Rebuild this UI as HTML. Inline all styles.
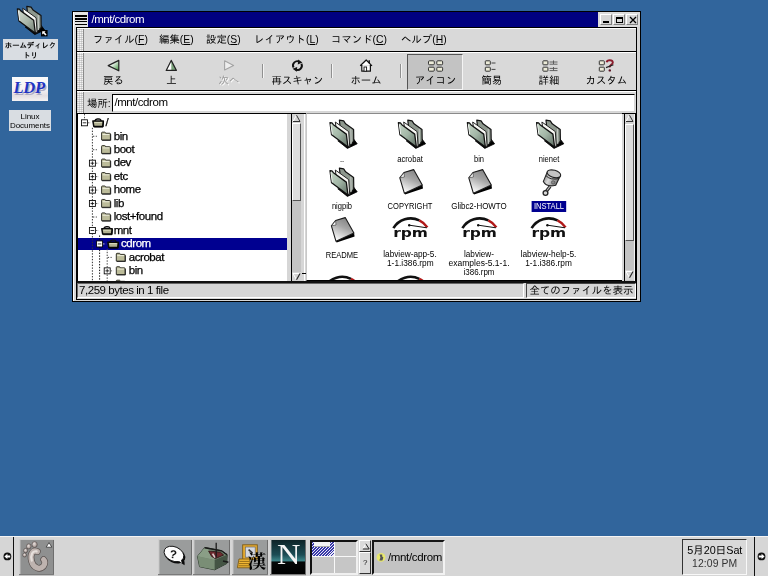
<!DOCTYPE html>
<html><head><meta charset="utf-8">
<style>
*{box-sizing:border-box;margin:0;padding:0}
html,body{width:768px;height:576px;overflow:hidden}
body{background:#31659c;font-family:"Liberation Sans","IPAGothic","Noto Sans CJK JP",sans-serif;font-size:11.5px;color:#000;position:relative;line-height:1}
.a{position:absolute}
.jp{font-family:"Liberation Sans","IPAGothic","Noto Sans CJK JP",sans-serif;font-size:10.4px}
.lat{letter-spacing:-0.45px}
/* window */
#win{position:absolute;left:72px;top:11px;width:569px;height:291px;background:#d6d6d6;border:1px solid #000}
#win .hl{position:absolute;left:0;top:0;width:1px;height:289px;background:#fff}
#ticon{position:absolute;left:1px;top:0;width:14px;height:15px;background:#e4e4e4}
#ticon i{position:absolute;left:1px;width:12px;height:1.4px;background:#000}
#title{position:absolute;left:15px;top:0;width:510px;height:15px;background:#000080;color:#fff;white-space:nowrap}
#title span{position:absolute;left:3.5px;top:1.5px;font-size:11.5px;letter-spacing:-0.5px}
#tbtns{position:absolute;left:525px;top:0;width:42px;height:15px;background:#dcdcdc}
.wb{position:absolute;top:2px;width:12px;height:11px;background:#d6d6d6;border:1px solid;border-color:#fff #808080 #808080 #fff}
#client{position:absolute;left:3px;top:15px;width:561px;height:273px;border:1px solid #000;background:#d6d6d6}
.bar{position:absolute;left:0;width:559px;background:#d9d9d9;border-top:1px solid #fff;border-bottom:1px solid #000}
.handle{position:absolute;left:0;top:0;bottom:0;width:7px;border-right:1px solid #8a8a8a;
 background-image:repeating-linear-gradient(0deg,#f4f4f4 0 1px,#d2d2d2 1px 2px);}
.handle:after{content:"";position:absolute;left:0;top:0;right:0;bottom:0;background-image:repeating-linear-gradient(90deg,rgba(120,120,120,.22) 0 1px,rgba(255,255,255,0) 1px 2px)}
.mi{position:absolute;top:5.5px;white-space:nowrap}
.mi u{text-decoration:underline;text-underline-offset:1px}
.tb{position:absolute;top:1px;height:35px;text-align:center}
.tb .lbl{position:absolute;left:-10px;right:-10px;top:20px;text-align:center;white-space:nowrap}
.tb svg{position:absolute;left:50%;top:3px}
.tl{position:absolute;top:23.1px;transform:translateX(-50%);white-space:nowrap}
.sep{position:absolute;top:10.5px;width:2px;height:14.5px;border-left:1px solid #909090;border-right:1px solid #f4f4f4}

.tt{-webkit-text-stroke:0.25px currentColor;position:absolute;font-size:11.5px;letter-spacing:-0.45px;white-space:nowrap}
.il{position:absolute;font-size:8.3px;white-space:nowrap;transform:translateX(-50%) scaleX(0.91);letter-spacing:0}
.sbtn{background:#d4d4d4}
.sld{background:#dedede;border:1px solid;border-color:#fff #555 #555 #fff}
.dl{background:#d9dde2;text-align:center;white-space:nowrap;color:#000}
.pb{background:#9a9c9c;box-shadow:inset 1.4px 1px 0 #cfcfcf,inset -1px 0 0 #6e6e6e,0 1.2px 0 #7a7a7a}
#win,#panel,.dl{will-change:transform}
</style></head>
<body>
<!-- desktop icons -->
<svg class="a" style="left:15px;top:4px" width="36" height="36" viewBox="0 0 36 36">
 <defs><linearGradient id="ff2" x1="0" y1="0" x2="1" y2="1"><stop offset="0" stop-color="#d4dcd0"/><stop offset="0.55" stop-color="#aab6a8"/><stop offset="1" stop-color="#6c786e"/></linearGradient></defs>
 <g transform="translate(1.2 1.4)">
 <path d="M9 21.6L18.6 29.2L28.4 24.6L24.6 19.6Z" fill="#000" stroke="#000" stroke-width="0.8" stroke-linejoin="round"/>
 <path d="M10.6 1L14.9 1.7L16.8 4.6L24.8 10.2L25 22L21 26.6L12 14Z" fill="#8e988e" stroke="#111" stroke-width="1.2" stroke-linejoin="round"/>
 <path d="M22 9.6L22.4 24.6" stroke="#c4c8c4" stroke-width="1"/>
 <path d="M6.5 2.8L19.9 12.4L20.9 27L19 27.2L8 14Z" fill="#f8f8f4" stroke="#222" stroke-width="1" stroke-linejoin="round"/>
 <path d="M1.2 3.5L3.2 3.7L4.6 5.5L17.5 14.9L19.2 27.8L2.8 15.6Z" fill="url(#ff2)" stroke="#111" stroke-width="1.3" stroke-linejoin="round"/>
 <path d="M2.1 5L3.5 15.2" stroke="#f0f4f0" stroke-width="1"/>
 </g>
 <rect x="26" y="26" width="6.6" height="6.4" fill="#000"/>
 <path d="M27.2 27.2H30.6L29.5 28.3L31.6 30.4L30.4 31.4L28.4 29.4L27.2 30.5Z" fill="#fff"/>
</svg>
<div class="a dl" style="left:3px;top:39px;width:55px;height:20.6px;font-size:7.35px;line-height:9.8px;padding-top:2.3px;font-weight:bold">ホームディレク<br>トリ</div>
<div class="a" style="left:12px;top:77px;width:36.2px;height:24px;background:linear-gradient(180deg,#fbfbfb 0,#f6f2f4 50%,#e4dfe2 78%,#f4f2f3 100%);overflow:hidden">
 <span class="a" style="left:2.6px;top:3.6px;font-family:'Liberation Serif',serif;font-style:italic;font-weight:bold;font-size:16.5px;line-height:18px;color:#b0acc4;letter-spacing:-0.2px">LDP</span>
 <span class="a" style="left:1.4px;top:2.4px;font-family:'Liberation Serif',serif;font-style:italic;font-weight:bold;font-size:16.5px;line-height:18px;color:#2034c4;letter-spacing:-0.2px">LDP</span>
</div>
<div class="a dl" style="left:9.2px;top:110px;width:42px;height:20.8px;font-size:8px;line-height:8.7px;padding-top:2.8px;letter-spacing:-0.05px">Linux<br>Documents</div>

<div id="win">
 <div class="hl"></div>
 <div id="ticon"><i style="top:3.2px"></i><i style="top:6.2px"></i><i style="top:9.1px"></i><i style="top:12.1px"></i></div>
 <div id="title"><span>/mnt/cdrom</span></div>
 <div id="tbtns">
  <div class="wb" style="left:2px"><i class="a" style="left:2px;top:5.5px;width:6px;height:2.2px;background:#000"></i></div>
  <div class="wb" style="left:15px"><i class="a" style="left:2px;top:1.5px;width:6.5px;height:6.5px;border:1px solid #000;border-top-width:2px"></i></div>
  <div class="wb" style="left:28px"><svg class="a" style="left:1.5px;top:1px" width="8" height="8" viewBox="0 0 8 8"><path d="M1 1L7 7M7 1L1 7" stroke="#000" stroke-width="1.3"/></svg></div>
 </div>
 <div id="client">
  <div class="bar" id="menubar" style="top:0;height:24px">
   <div class="handle"></div>
   <span class="mi jp" style="left:16px">ファイル(<u>F</u>)</span>
   <span class="mi jp" style="left:82px">編集(<u>E</u>)</span>
   <span class="mi jp" style="left:129px">設定(<u>S</u>)</span>
   <span class="mi jp" style="left:177px">レイアウト(<u>L</u>)</span>
   <span class="mi jp" style="left:254px">コマンド(<u>C</u>)</span>
   <span class="mi jp" style="left:324px">ヘルプ(<u>H</u>)</span>
  </div>
  <div class="bar" id="toolbar" style="top:24px;height:39px">
   <div class="handle"></div>
   <div class="a" style="left:330px;top:1px;width:56px;height:36px;background:#c3c3c3;border:1px solid;border-color:#555 #f4f4f4 #f4f4f4 #555"></div>
   <svg class="a" style="left:0;top:0" width="560" height="38" viewBox="77 52 560 38">
    <defs>
     <linearGradient id="gb" x1="0" y1="0" x2="1" y2="1"><stop offset="0.3" stop-color="#fff"/><stop offset="1" stop-color="#3f8f3f"/></linearGradient>
     <linearGradient id="gu" x1="0" y1="0" x2="1" y2="0"><stop offset="0.45" stop-color="#fff"/><stop offset="0.55" stop-color="#7aa27a"/></linearGradient>
    </defs>
    <!-- back -->
    <path d="M108.2 64.6L118.8 59.4L118.8 69.8Z" fill="url(#gb)" stroke="#222" stroke-width="1.2" stroke-linejoin="round"/>
    <!-- up -->
    <path d="M171.2 59.4L176.4 69.4L166.2 69.4Z" fill="url(#gu)" stroke="#222" stroke-width="1.2" stroke-linejoin="round"/>
    <!-- forward (disabled) -->
    <path d="M224.6 59.8L233.6 64.5L224.6 69Z" fill="#eee" stroke="#a4a4a4" stroke-width="1.1" stroke-linejoin="round"/>
    <!-- rescan -->
    <g fill="none" stroke="#111" stroke-width="1.9">
     <path d="M293.6 66.6A4.2 4.2 0 0 1 299.6 61"/>
     <path d="M301.4 62.8A4.2 4.2 0 0 1 295.6 68.4"/>
    </g>
    <path d="M298.2 58.6L302.4 61.6L297.8 63.4Z" fill="#111"/>
    <path d="M296.8 70.8L292.6 67.8L297.2 66Z" fill="#111"/>
    <!-- home -->
    <path d="M360.2 64.8L366.2 59L372 64.8M361.8 64V70.2H370.4V64" fill="#fff" stroke="#111" stroke-width="1.2" stroke-linejoin="round"/>
    <path d="M369.2 59.2V62.2" stroke="#111" stroke-width="1.4"/>
    <rect x="364" y="66" width="2.6" height="4.2" fill="#fff" stroke="#111" stroke-width="0.9"/>
    <!-- icons -->
    <g fill="#ecebd8" stroke="#333" stroke-width="1">
     <rect x="428.5" y="59.8" width="5.8" height="4" rx="1"/><rect x="436.8" y="59.8" width="5.8" height="4" rx="1"/>
     <rect x="428.5" y="66.2" width="5.8" height="4" rx="1"/><rect x="436.8" y="66.2" width="5.8" height="4" rx="1"/>
     <!-- brief -->
     <rect x="485.3" y="59.8" width="5" height="4" rx="0.6"/><rect x="485.3" y="66.2" width="5" height="4" rx="0.6"/>
     <!-- detail -->
     <rect x="542.9" y="59.8" width="5" height="4" rx="0.6"/><rect x="542.9" y="66.2" width="5" height="4" rx="0.6"/>
     <!-- custom -->
     <rect x="599.3" y="59.8" width="5" height="4" rx="0.6"/><rect x="599.3" y="66.2" width="5" height="4" rx="0.6"/>
    </g>
    <g stroke="#444" stroke-width="1">
     <path d="M491.5 62H495.5M491.5 68.4H495.5"/>
     <path d="M549.5 61H557.5M549.5 63.2H557.5M553.5 59.4V63M549.5 67.4H557.5M549.5 69.6H557.5M553.5 66V69.6" stroke="#555" stroke-width="0.9"/>
    </g>
    <path d="M606.6 61.2C607.2 58.6 612.6 58.6 612.8 61.4C612.8 63.6 609.6 63.6 609.8 66.4" fill="none" stroke="#8c1c2c" stroke-width="1.9"/>
    <path d="M606 66.6L613.4 63.8" stroke="#222" stroke-width="1.2"/>
    <circle cx="609.8" cy="69.4" r="1.2" fill="#5a1020"/>
   </svg>
   <div class="sep" style="left:185px"></div>
   <div class="sep" style="left:254px"></div>
   <div class="sep" style="left:322.5px"></div>
   <span class="tl jp" style="left:36.5px">戻る</span>
   <span class="tl jp" style="left:94.4px">上</span>
   <span class="tl jp" style="left:152px;color:#999;text-shadow:1px 1px 0 #fff">次へ</span>
   <span class="tl jp" style="left:220.5px">再スキャン</span>
   <span class="tl jp" style="left:289px">ホーム</span>
   <span class="tl jp" style="left:358.6px">アイコン</span>
   <span class="tl jp" style="left:414.8px">簡易</span>
   <span class="tl jp" style="left:472px">詳細</span>
   <span class="tl jp" style="left:529.4px">カスタム</span>

  </div>
  <div class="bar" id="locbar" style="top:63px;height:23px">
   <div class="handle"></div>
   <span class="a jp" style="left:10px;top:6.5px">場所:</span>
   <div class="a" style="left:35px;top:2.4px;width:523px;height:17.2px;background:#fff;border:1px solid #000;border-right-color:#d6d6d6;border-bottom-color:#d6d6d6"><span class="a lat" style="left:1.5px;top:2px;font-size:11.5px">/mnt/cdrom</span></div>
  </div>
  <!-- panes: client inner origin (77,28) -->
  <div class="a" id="treepane" style="left:0;top:85px;width:210px;height:168.5px;background:#fff;border-top:1.5px solid #000;border-left:1px solid #000;overflow:hidden"><div class="a" style="left:-1px;top:-0.5px;width:211px;height:167px"><!--TREE--><div class="a" style="left:0;top:124.04px;width:210.5px;height:12.8px;background:#000090"></div>
<svg class="a" style="left:0;top:0" width="211" height="167" viewBox="0 0 211 167"><path d="M7.50 0.00L7.50 8.80" stroke="#555" stroke-width="1" stroke-dasharray="1.4 1.45" fill="none"/><path d="M15.40 13.80L15.40 168.00" stroke="#333" stroke-width="1" stroke-dasharray="1.4 1.45" fill="none"/><path d="M22.60 121.48L22.60 168.00" stroke="#111" stroke-width="1" stroke-dasharray="1.4 1.45" fill="none"/><path d="M30.20 134.94L30.20 168.00" stroke="#444" stroke-width="1" stroke-dasharray="1.4 1.45" fill="none"/><rect x="4.50" y="5.80" width="6.0" height="6.0" fill="#fff" stroke="#000" stroke-width="0.85"/><path d="M5.70 8.80H9.30" stroke="#000" stroke-width="0.8"/><path d="M11.00 8.80L14.00 8.80" stroke="#666" stroke-width="1" stroke-dasharray="1.4 1.45" fill="none"/><g transform="translate(15.20 4.20)"><path d="M2.6 2.8Q3.2 0.8 5 0.8H7Q8.6 0.8 9 2.8" fill="none" stroke="#111" stroke-width="1.4"/><path d="M0.7 2.9H11.1L10.5 8.2H1.6Z" fill="#b0b090" stroke="#0a0a0a" stroke-width="1.5" stroke-linejoin="round"/><path d="M2.2 4.3H9.6" stroke="#e0e0c4" stroke-width="0.9"/><path d="M11.4 3.4L10.9 8.8H2" stroke="#000" stroke-width="0.9" fill="none"/></g><path d="M15.90 22.26L19.90 22.26" stroke="#444" stroke-width="1" stroke-dasharray="1.4 1.45" fill="none"/><g transform="translate(24.10 17.66)"><path d="M0.5 1.2Q0.5 0.5 1.2 0.5H3.6Q4.3 0.5 4.5 1.6H8.6Q9.3 1.6 9.3 2.3V8.3H0.5Z" fill="#bcbc9a" stroke="#33332a" stroke-width="1"/><path d="M1.4 2.8H8.2" stroke="#eeeedd" stroke-width="1"/><path d="M9.6 2.6V8.7H1" stroke="#222" stroke-width="0.9" fill="none"/></g><path d="M15.90 35.72L19.90 35.72" stroke="#444" stroke-width="1" stroke-dasharray="1.4 1.45" fill="none"/><g transform="translate(24.10 31.12)"><path d="M0.5 1.2Q0.5 0.5 1.2 0.5H3.6Q4.3 0.5 4.5 1.6H8.6Q9.3 1.6 9.3 2.3V8.3H0.5Z" fill="#bcbc9a" stroke="#33332a" stroke-width="1"/><path d="M1.4 2.8H8.2" stroke="#eeeedd" stroke-width="1"/><path d="M9.6 2.6V8.7H1" stroke="#222" stroke-width="0.9" fill="none"/></g><rect x="12.40" y="46.18" width="6.0" height="6.0" fill="#fff" stroke="#000" stroke-width="0.85"/><path d="M13.60 49.18H17.20" stroke="#000" stroke-width="0.8"/><path d="M15.40 47.38V50.98" stroke="#000" stroke-width="0.8"/><path d="M18.90 49.18L21.90 49.18" stroke="#666" stroke-width="1" stroke-dasharray="1.4 1.45" fill="none"/><g transform="translate(24.10 44.58)"><path d="M0.5 1.2Q0.5 0.5 1.2 0.5H3.6Q4.3 0.5 4.5 1.6H8.6Q9.3 1.6 9.3 2.3V8.3H0.5Z" fill="#bcbc9a" stroke="#33332a" stroke-width="1"/><path d="M1.4 2.8H8.2" stroke="#eeeedd" stroke-width="1"/><path d="M9.6 2.6V8.7H1" stroke="#222" stroke-width="0.9" fill="none"/></g><rect x="12.40" y="59.64" width="6.0" height="6.0" fill="#fff" stroke="#000" stroke-width="0.85"/><path d="M13.60 62.64H17.20" stroke="#000" stroke-width="0.8"/><path d="M15.40 60.84V64.44" stroke="#000" stroke-width="0.8"/><path d="M18.90 62.64L21.90 62.64" stroke="#666" stroke-width="1" stroke-dasharray="1.4 1.45" fill="none"/><g transform="translate(24.10 58.04)"><path d="M0.5 1.2Q0.5 0.5 1.2 0.5H3.6Q4.3 0.5 4.5 1.6H8.6Q9.3 1.6 9.3 2.3V8.3H0.5Z" fill="#bcbc9a" stroke="#33332a" stroke-width="1"/><path d="M1.4 2.8H8.2" stroke="#eeeedd" stroke-width="1"/><path d="M9.6 2.6V8.7H1" stroke="#222" stroke-width="0.9" fill="none"/></g><rect x="12.40" y="73.10" width="6.0" height="6.0" fill="#fff" stroke="#000" stroke-width="0.85"/><path d="M13.60 76.10H17.20" stroke="#000" stroke-width="0.8"/><path d="M15.40 74.30V77.90" stroke="#000" stroke-width="0.8"/><path d="M18.90 76.10L21.90 76.10" stroke="#666" stroke-width="1" stroke-dasharray="1.4 1.45" fill="none"/><g transform="translate(24.10 71.50)"><path d="M0.5 1.2Q0.5 0.5 1.2 0.5H3.6Q4.3 0.5 4.5 1.6H8.6Q9.3 1.6 9.3 2.3V8.3H0.5Z" fill="#bcbc9a" stroke="#33332a" stroke-width="1"/><path d="M1.4 2.8H8.2" stroke="#eeeedd" stroke-width="1"/><path d="M9.6 2.6V8.7H1" stroke="#222" stroke-width="0.9" fill="none"/></g><rect x="12.40" y="86.56" width="6.0" height="6.0" fill="#fff" stroke="#000" stroke-width="0.85"/><path d="M13.60 89.56H17.20" stroke="#000" stroke-width="0.8"/><path d="M15.40 87.76V91.36" stroke="#000" stroke-width="0.8"/><path d="M18.90 89.56L21.90 89.56" stroke="#666" stroke-width="1" stroke-dasharray="1.4 1.45" fill="none"/><g transform="translate(24.10 84.96)"><path d="M0.5 1.2Q0.5 0.5 1.2 0.5H3.6Q4.3 0.5 4.5 1.6H8.6Q9.3 1.6 9.3 2.3V8.3H0.5Z" fill="#bcbc9a" stroke="#33332a" stroke-width="1"/><path d="M1.4 2.8H8.2" stroke="#eeeedd" stroke-width="1"/><path d="M9.6 2.6V8.7H1" stroke="#222" stroke-width="0.9" fill="none"/></g><path d="M15.90 103.02L19.90 103.02" stroke="#444" stroke-width="1" stroke-dasharray="1.4 1.45" fill="none"/><g transform="translate(24.10 98.42)"><path d="M0.5 1.2Q0.5 0.5 1.2 0.5H3.6Q4.3 0.5 4.5 1.6H8.6Q9.3 1.6 9.3 2.3V8.3H0.5Z" fill="#bcbc9a" stroke="#33332a" stroke-width="1"/><path d="M1.4 2.8H8.2" stroke="#eeeedd" stroke-width="1"/><path d="M9.6 2.6V8.7H1" stroke="#222" stroke-width="0.9" fill="none"/></g><rect x="12.40" y="113.48" width="6.0" height="6.0" fill="#fff" stroke="#000" stroke-width="0.85"/><path d="M13.60 116.48H17.20" stroke="#000" stroke-width="0.8"/><path d="M18.90 116.48L21.90 116.48" stroke="#666" stroke-width="1" stroke-dasharray="1.4 1.45" fill="none"/><g transform="translate(24.10 111.88)"><path d="M2.6 2.8Q3.2 0.8 5 0.8H7Q8.6 0.8 9 2.8" fill="none" stroke="#111" stroke-width="1.4"/><path d="M0.7 2.9H11.1L10.5 8.2H1.6Z" fill="#b0b090" stroke="#0a0a0a" stroke-width="1.5" stroke-linejoin="round"/><path d="M2.2 4.3H9.6" stroke="#e0e0c4" stroke-width="0.9"/><path d="M11.4 3.4L10.9 8.8H2" stroke="#000" stroke-width="0.9" fill="none"/></g><rect x="19.60" y="126.94" width="6.0" height="6.0" fill="#fff" stroke="#000" stroke-width="0.85"/><path d="M20.80 129.94H24.40" stroke="#000" stroke-width="0.8"/><path d="M26.10 129.94L29.10 129.94" stroke="#ccc" stroke-width="1" stroke-dasharray="1.4 1.45" fill="none"/><g transform="translate(30.20 125.34)"><path d="M2.6 2.8Q3.2 0.8 5 0.8H7Q8.6 0.8 9 2.8" fill="none" stroke="#111" stroke-width="1.4"/><path d="M0.7 2.9H11.1L10.5 8.2H1.6Z" fill="#b0b090" stroke="#0a0a0a" stroke-width="1.5" stroke-linejoin="round"/><path d="M2.2 4.3H9.6" stroke="#e0e0c4" stroke-width="0.9"/><path d="M11.4 3.4L10.9 8.8H2" stroke="#000" stroke-width="0.9" fill="none"/></g><path d="M30.70 143.40L34.70 143.40" stroke="#444" stroke-width="1" stroke-dasharray="1.4 1.45" fill="none"/><g transform="translate(38.80 138.80)"><path d="M0.5 1.2Q0.5 0.5 1.2 0.5H3.6Q4.3 0.5 4.5 1.6H8.6Q9.3 1.6 9.3 2.3V8.3H0.5Z" fill="#bcbc9a" stroke="#33332a" stroke-width="1"/><path d="M1.4 2.8H8.2" stroke="#eeeedd" stroke-width="1"/><path d="M9.6 2.6V8.7H1" stroke="#222" stroke-width="0.9" fill="none"/></g><rect x="27.20" y="153.86" width="6.0" height="6.0" fill="#fff" stroke="#000" stroke-width="0.85"/><path d="M28.40 156.86H32.00" stroke="#000" stroke-width="0.8"/><path d="M30.20 155.06V158.66" stroke="#000" stroke-width="0.8"/><path d="M33.70 156.86L36.70 156.86" stroke="#666" stroke-width="1" stroke-dasharray="1.4 1.45" fill="none"/><g transform="translate(38.80 152.26)"><path d="M0.5 1.2Q0.5 0.5 1.2 0.5H3.6Q4.3 0.5 4.5 1.6H8.6Q9.3 1.6 9.3 2.3V8.3H0.5Z" fill="#bcbc9a" stroke="#33332a" stroke-width="1"/><path d="M1.4 2.8H8.2" stroke="#eeeedd" stroke-width="1"/><path d="M9.6 2.6V8.7H1" stroke="#222" stroke-width="0.9" fill="none"/></g><path d="M30.70 170.32L34.70 170.32" stroke="#444" stroke-width="1" stroke-dasharray="1.4 1.45" fill="none"/><g transform="translate(38.80 165.72)"><path d="M0.5 1.2Q0.5 0.5 1.2 0.5H3.6Q4.3 0.5 4.5 1.6H8.6Q9.3 1.6 9.3 2.3V8.3H0.5Z" fill="#bcbc9a" stroke="#33332a" stroke-width="1"/><path d="M1.4 2.8H8.2" stroke="#eeeedd" stroke-width="1"/><path d="M9.6 2.6V8.7H1" stroke="#222" stroke-width="0.9" fill="none"/></g></svg>
<span class="tt" style="left:28.6px;top:3.60px;color:#000">/</span>
<span class="tt" style="left:36.7px;top:17.06px;color:#000">bin</span>
<span class="tt" style="left:36.7px;top:30.52px;color:#000">boot</span>
<span class="tt" style="left:36.7px;top:43.98px;color:#000">dev</span>
<span class="tt" style="left:36.7px;top:57.44px;color:#000">etc</span>
<span class="tt" style="left:36.7px;top:70.90px;color:#000">home</span>
<span class="tt" style="left:36.7px;top:84.36px;color:#000">lib</span>
<span class="tt" style="left:36.7px;top:97.82px;color:#000">lost+found</span>
<span class="tt" style="left:36.7px;top:111.28px;color:#000">mnt</span>
<span class="tt" style="left:44.0px;top:124.74px;color:#fff">cdrom</span>
<span class="tt" style="left:51.8px;top:138.20px;color:#000">acrobat</span>
<span class="tt" style="left:51.8px;top:151.66px;color:#000">bin</span>
<span class="tt" style="left:51.8px;top:165.12px;color:#000"></span>
<!--/TREE--></div></div>
  <div class="a" id="tsb" style="left:214px;top:85px;width:10px;height:168px;background:#c4c4c4;border-left:1px solid #000;border-top:1px solid #000">
    <div class="a sbtn" style="left:0;top:0;width:9px;height:9px"><svg class="a" style="left:0;top:0" width="9" height="9" viewBox="0 0 9 9"><path d="M1 7.5L4.5 1.2" stroke="#fff" stroke-width="1" fill="none"/><path d="M4.5 1.2L8 7.5H1" stroke="#333" stroke-width="1" fill="none"/></svg></div>
    <div class="a sld" style="left:0;top:9px;width:9px;height:78px"></div>
    <div class="a sbtn" style="left:0;top:157.5px;width:9px;height:9px"><svg class="a" style="left:0;top:0" width="9" height="9" viewBox="0 0 9 9"><path d="M8 1.5H1L4.5 7.8" stroke="#fff" stroke-width="1" fill="none"/><path d="M8 1.5L4.5 7.8" stroke="#222" stroke-width="1.1" fill="none"/></svg></div>
  </div>
  <div class="a" style="left:226.5px;top:86px;width:1px;height:167px;background:#fff"></div>
  <div class="a" style="left:225px;top:244.6px;width:4px;height:1.2px;background:#000"></div>
  <div class="a" id="iconpane" style="left:228.5px;top:85px;width:316.5px;height:168.4px;background:#fff;border-top:1.5px solid #8a8a8a;border-left:1px solid #c8c8c8;border-bottom:1.6px solid #000;overflow:hidden"><div class="a" style="left:0;top:-0.5px;width:316px;height:167px"><!--ICONS--><svg class="a" style="left:0;top:0" width="316" height="167" viewBox="0 0 316 167"><defs>
<linearGradient id="ff" x1="0" y1="0" x2="1" y2="1"><stop offset="0" stop-color="#c8d8c8"/><stop offset="0.5" stop-color="#a2b6a6"/><stop offset="1" stop-color="#5c6a60"/></linearGradient>
<linearGradient id="dg" x1="0.75" y1="0" x2="0.3" y2="1"><stop offset="0" stop-color="#7e7e7e"/><stop offset="0.42" stop-color="#a6a6a6"/><stop offset="0.78" stop-color="#dedede"/><stop offset="1" stop-color="#ffffff"/></linearGradient>
<linearGradient id="pg" x1="0" y1="0" x2="1" y2="0.4"><stop offset="0" stop-color="#666"/><stop offset="0.45" stop-color="#d8d8d8"/><stop offset="1" stop-color="#777"/></linearGradient>
<g id="folder">
 <path d="M9 21.6L18.6 29.2L28.4 24.6L24.6 19.6Z" fill="#000" stroke="#000" stroke-width="0.8" stroke-linejoin="round"/>
 <path d="M10.6 1L14.9 1.7L16.8 4.6L24.8 10.2L25 22L21 26.6L12 14Z" fill="#8e988e" stroke="#111" stroke-width="1.2" stroke-linejoin="round"/>
 <path d="M22 9.6L22.4 24.6" stroke="#c4c8c4" stroke-width="1"/>
 <path d="M6.5 2.8L19.9 12.4L20.9 27L19 27.2L8 14Z" fill="#f8f8f4" stroke="#222" stroke-width="1" stroke-linejoin="round"/>
 <path d="M1.2 3.5L3.2 3.7L4.6 5.5L17.5 14.9L19.2 27.8L2.8 15.6Z" fill="url(#ff)" stroke="#111" stroke-width="1.3" stroke-linejoin="round"/>
 <path d="M2.1 5L3.5 15.2" stroke="#f0f4f0" stroke-width="1"/>
</g>
<g id="doc">
 <path d="M6.6 26.4L24.6 20.6L24 16.8L6 25Z" fill="#000"/>
 <path d="M1.4 9.9L5.6 4.5L15.2 1.6L23.9 17L6 25.3Z" fill="url(#dg)" stroke="#1a1a1a" stroke-width="1.1" stroke-linejoin="round"/>
 <path d="M1.6 9.8L6 9L5.6 4.7Z" fill="#fafafa" stroke="#333" stroke-width="0.6"/>
</g>
<g id="piston">
 <path d="M9.6 18.4L5.2 24" stroke="#222" stroke-width="3.2"/>
 <path d="M9.6 18.4L5.2 24" stroke="#bbb" stroke-width="1.2"/>
 <circle cx="5" cy="25" r="2.4" fill="#d8d8d8" stroke="#222" stroke-width="1.3"/>
 <path d="M6.6 4.4L2.8 13.6Q6 19.6 15.2 17.2L19.8 7.8Z" fill="url(#pg)" stroke="#222" stroke-width="1.1"/>
 <ellipse cx="13.4" cy="5.8" rx="7" ry="3.6" transform="rotate(16 13.4 5.8)" fill="#c4c4c4" stroke="#222" stroke-width="1.1"/>
 <path d="M5.4 7.6Q9.6 12.4 18.6 10.6" fill="none" stroke="#222" stroke-width="1"/>
 <circle cx="12.6" cy="14.4" r="1.7" fill="#888" stroke="#444" stroke-width="0.6"/>
</g>
<g id="rpm">
 <path d="M2.6 12.2A20 20 0 0 1 28.5 4.4" fill="none" stroke="#111" stroke-width="2.6"/>
 <path d="M20 2.4A20 20 0 0 1 28.5 4.4" fill="none" stroke="#111" stroke-width="1.2"/>
 <path d="M28.5 4.4A20 20 0 0 1 36.6 11.4" fill="none" stroke="#b01818" stroke-width="2.4"/>
 <path d="M18.6 9.2L36 11.8" stroke="#111" stroke-width="1"/>
 <circle cx="18.4" cy="9.2" r="1.2" fill="#111"/>
 <text x="2.4" y="20.7" font-family="'DejaVu Sans','Liberation Sans',sans-serif" font-weight="bold" font-size="12.6" textLength="34.8" lengthAdjust="spacingAndGlyphs" fill="#111">rpm</text>
</g>
</defs><use href="#folder" x="21.80" y="5.20"/><use href="#folder" x="90.20" y="5.20"/><use href="#folder" x="159.20" y="5.20"/><use href="#folder" x="228.40" y="5.20"/><use href="#folder" x="21.80" y="53.20"/><use href="#doc" x="91.40" y="54.00"/><use href="#doc" x="160.40" y="54.00"/><use href="#piston" x="233.50" y="54.00"/><use href="#doc" x="23.00" y="102.00"/><use href="#rpm" x="83.80" y="102.00"/><use href="#rpm" x="152.80" y="102.00"/><use href="#rpm" x="222.00" y="102.00"/><use href="#rpm" x="15.40" y="160.40"/><use href="#rpm" x="83.80" y="160.40"/></svg>
<span class="il" style="left:35.40px;top:41.30px">..</span>
<span class="il" style="left:103.80px;top:41.30px;transform:translateX(-50%) scaleX(0.93)">acrobat</span>
<span class="il" style="left:172.80px;top:41.30px">bin</span>
<span class="il" style="left:242.00px;top:41.30px">nienet</span>
<span class="il" style="left:35.40px;top:88.60px">nigpib</span>
<span class="il" style="left:103.80px;top:88.60px">COPYRIGHT</span>
<span class="il" style="left:172.80px;top:88.60px;transform:translateX(-50%) scaleX(0.958)">Glibc2-HOWTO</span>
<span class="il" style="left:242.00px;top:88.60px;background:#000090;color:#fff;padding:1.6px 2.6px 1.7px 2.6px;margin-top:-1.6px">INSTALL</span>
<span class="il" style="left:35.40px;top:137.10px">README</span>
<span class="il" style="left:103.80px;top:136.90px;transform:translateX(-50%) scaleX(0.99)">labview-app-5.</span>
<span class="il" style="left:103.80px;top:145.80px;transform:translateX(-50%) scaleX(1.0)">1-1.i386.rpm</span>
<span class="il" style="left:172.80px;top:136.90px;transform:translateX(-50%) scaleX(0.985)">labview-</span>
<span class="il" style="left:172.80px;top:145.80px;transform:translateX(-50%) scaleX(1.026)">examples-5.1-1.</span>
<span class="il" style="left:172.80px;top:154.70px;transform:translateX(-50%) scaleX(0.96)">i386.rpm</span>
<span class="il" style="left:242.00px;top:136.90px;transform:translateX(-50%) scaleX(1.0)">labview-help-5.</span>
<span class="il" style="left:242.00px;top:145.80px;transform:translateX(-50%) scaleX(1.0)">1-1.i386.rpm</span>
<!--/ICONS--></div></div>
  <div class="a" id="isb" style="left:546.5px;top:85px;width:12.5px;height:168px;background:#c4c4c4;border-left:1px solid #000;border-top:1px solid #000;border-right:1px solid #000;box-shadow:inset -1px 0 0 #f4f4f4">
    <div class="a sbtn" style="left:0;top:0;width:9.5px;height:9.5px"><svg class="a" style="left:0.3px;top:0" width="9" height="9" viewBox="0 0 9 9"><path d="M1 7.5L4.5 1.2" stroke="#fff" stroke-width="1" fill="none"/><path d="M4.5 1.2L8 7.5H1" stroke="#333" stroke-width="1" fill="none"/></svg></div>
    <div class="a sld" style="left:0;top:10px;width:9.5px;height:117px"></div>
    <div class="a sbtn" style="left:0;top:156px;width:9.5px;height:9.5px"><svg class="a" style="left:0.3px;top:0" width="9" height="9" viewBox="0 0 9 9"><path d="M8 1.5H1L4.5 7.8" stroke="#fff" stroke-width="1" fill="none"/><path d="M8 1.5L4.5 7.8" stroke="#222" stroke-width="1.1" fill="none"/></svg></div>
  </div>
  <!-- status -->
  <div class="a" style="left:0;top:253.4px;width:559px;height:1.3px;background:#111"></div>
  <div class="a" style="left:0;top:254.6px;width:446.5px;height:15.4px;border:1px solid;border-color:#666 #fff #fff #666;background:#d6d6d6"><span class="a lat" style="left:1px;top:1px;font-size:11.5px;white-space:nowrap">7,259 bytes in 1 file</span></div>
  <div class="a" style="left:448.5px;top:254.6px;width:110.5px;height:15.4px;border:1px solid;border-color:#444 #fff #fff #444;background:#d6d6d6"><span class="a jp" style="left:3px;top:2px;white-space:nowrap">全てのファイルを表示</span></div>

 </div>
</div>

<!-- panel -->
<div id="panel" class="a" style="left:0;top:536px;width:768px;height:40px;background:#d6d6d6;border-top:1px solid #f4f4f4">
 <!-- hide buttons -->
 <div class="a" style="left:13px;top:0;width:1.2px;height:40px;background:#111"></div>
 <div class="a" style="left:754px;top:0;width:1.2px;height:40px;background:#111"></div>
 <svg class="a" style="left:1.8px;top:14.2px" width="11" height="11" viewBox="0 0 11 11"><circle cx="5.4" cy="5.4" r="3.9" fill="#111"/><path d="M2.4 5.4L5.4 2.8V4.4H8.2V6.4H5.4V8Z" fill="#fff"/></svg>
 <svg class="a" style="left:756px;top:14.2px" width="11" height="11" viewBox="0 0 11 11"><circle cx="5.5" cy="5.4" r="3.9" fill="#111"/><path d="M8.6 5.4L5.6 2.8V4.4H2.8V6.4H5.6V8Z" fill="#fff"/></svg>
 <!-- foot menu -->
 <div class="a pb" style="left:19px;top:1.8px;width:34.5px;height:35.2px;background:#8f9090">
  <svg class="a" style="left:0;top:0" width="35" height="36" viewBox="0 0 35 36">
   <defs><radialGradient id="fg" cx="0.4" cy="0.35" r="0.7"><stop offset="0" stop-color="#e8e1de"/><stop offset="0.6" stop-color="#b8aca8"/><stop offset="1" stop-color="#746a68"/></radialGradient></defs>
   <g fill="url(#fg)" stroke="#5a5250" stroke-width="0.7">
    <ellipse cx="15.6" cy="5.6" rx="2.6" ry="3"/><ellipse cx="9.8" cy="7.4" rx="2.3" ry="2.6"/><ellipse cx="6.6" cy="11.6" rx="2" ry="2.2"/><ellipse cx="5.6" cy="16" rx="1.9" ry="2"/>
    <path d="M18.4 12.6C13.6 10.4 10.6 15.6 12.6 22.4C14.4 28.6 20.6 31.6 24.6 27C26.4 24.6 26 22 24.6 20.6" fill="none" stroke="#5a5250" stroke-width="6.6" stroke-linecap="round"/><path d="M18.4 12.6C13.6 10.4 10.6 15.6 12.6 22.4C14.4 28.6 20.6 31.6 24.6 27C26.4 24.6 26 22 24.6 20.6" fill="none" stroke="#beb3af" stroke-width="5.2" stroke-linecap="round"/><path d="M17.6 12.4C13.4 11.4 11.2 16 12.8 21.6" fill="none" stroke="#e6dfdb" stroke-width="2.2" stroke-linecap="round"/>
   </g>
   <path d="M27.2 8.2L30 3.6L32.8 8.2Z" fill="#fff" stroke="#222" stroke-width="0.7"/>
  </svg>
 </div>
 <!-- launchers -->
 <div class="a pb" style="left:158.4px;top:1.8px;width:33.4px;height:35.2px">
  <svg class="a" style="left:-1.6px;top:-2.6px" width="36.3" height="38.5" viewBox="0 0 33 35"><g transform="rotate(24 15.6 16.4)"><ellipse cx="16.6" cy="17.2" rx="10" ry="6.9" fill="#0a0a0a"/></g><path d="M17.6 21.6L25 26.6Q25.6 24 23.6 19.4Z" fill="#0a0a0a"/><g transform="rotate(24 15.6 16.4)"><ellipse cx="15.4" cy="16.4" rx="9.4" ry="6.5" fill="#fdfdfd" stroke="#111" stroke-width="0.8"/></g><path d="M17.4 20.4L22.6 24.8L20.8 18.8Z" fill="#fdfdfd"/><text x="14.8" y="20.2" text-anchor="middle" font-family="'Liberation Sans',sans-serif" font-weight="bold" font-size="10.5" fill="#111" transform="rotate(8 15 16)">?</text></svg>
 </div>
 <div class="a pb" style="left:192.8px;top:1.8px;width:37px;height:35.2px">
  <svg class="a" style="left:0;top:0" width="37" height="38" viewBox="0 0 37 38">
   <path d="M4.5 17.3L11.8 8.4L28.4 11.6L34.2 15.7L33.7 24.6L21.7 30.8L6.6 27.7Z" fill="#6f846e" stroke="#2c382c" stroke-width="1" stroke-linejoin="round"/>
   <path d="M4.5 17.3L11.8 8.4L19.4 12.2L21.7 20.9Z" fill="#8a9e86"/>
   <path d="M4.5 17.3L21.7 20.9V30.8L6.6 27.7Z" fill="#7a8e76"/>
   <path d="M21.7 20.9L34.2 15.7L33.7 24.6L21.7 30.8Z" fill="#445444"/>
   <path d="M15.6 12L27.4 13.2L30.6 16L22.4 19.6L18.6 17.4Z" fill="#6e2a2e" stroke="#2a1414" stroke-width="0.8"/>
   <path d="M19.6 14.6L22 18.6" stroke="#d8c8c8" stroke-width="1.8"/>
   <path d="M23.2 3.8V18.4" stroke="#1a1a1a" stroke-width="1.3"/>
   <path d="M11.6 8.8L28.6 11.8L34 15.8" fill="none" stroke="#1a1a1a" stroke-width="1.4"/>
   <path d="M30 22L35.4 23.2" stroke="#1a1a1a" stroke-width="1.6"/>
  </svg>
 </div>
 <div class="a pb" style="left:232.4px;top:1.8px;width:35.4px;height:35.2px">
  <svg class="a" style="left:0;top:0" width="36" height="38" viewBox="0 0 36 38">
   <rect x="10.7" y="5.8" width="14.6" height="14.6" fill="#e8ac30" stroke="#7a5a18" stroke-width="0.9"/>
   <rect x="13.3" y="8" width="9.9" height="10.2" fill="#d4d8e0" stroke="#666" stroke-width="0.7"/>
   <path d="M7 20H17.6L18.6 28.8H5.4Z" fill="#f2b834" stroke="#7a5a18" stroke-width="0.9"/>
   <path d="M7.4 22.4H17.4M7 24.6H17.8M6.6 26.8H18.2" stroke="#8a6414" stroke-width="0.9"/>
   <path d="M16.6 10.6L20.6 14.2" stroke="#333" stroke-width="1.6"/>
   <text x="24.9" y="29.2" text-anchor="middle" font-family="'Noto Serif CJK SC','Noto Sans CJK JP',serif" font-weight="bold" font-size="18.5" fill="#000">漢</text>
  </svg>
 </div>
 <div class="a pb" style="left:269.8px;top:1.8px;width:36.4px;height:35.2px;background:linear-gradient(180deg,#0c2024 0,#1c4c54 45%,#3c8488 62%,#050808 66%,#000 100%)">
  <span class="a" style="left:7.6px;top:1.4px;font-family:'Liberation Serif',serif;font-size:29px;line-height:29px;color:#f4f4f4;transform:scaleX(1.12);transform-origin:0 0">N</span>
 </div>
 <!-- pager -->
 <div class="a" style="left:310px;top:2.8px;width:48px;height:34.8px;background:#c6c6c6;border:2px solid;border-color:#111 #f0f0f0 #f0f0f0 #111">
  <div class="a" style="left:0;top:0;width:21.6px;height:14.4px;background:repeating-linear-gradient(135deg,#3838a8 0 0.9px,#e8e8f8 0.9px 2.1px)"></div>
  <div class="a" style="left:2px;top:0;width:15.6px;height:5.4px;background:#f4f4f4;border-bottom:1px solid #aaa"></div>
  <div class="a" style="left:21.6px;top:0;width:1.3px;height:31px;background:#f8f8f8"></div>
  <div class="a" style="left:0;top:14.4px;width:44px;height:1.3px;background:#f8f8f8"></div>
 </div>
 <!-- tasklist arrows -->
 <div class="a" style="left:359.4px;top:3px;width:11.6px;height:12px;background:#dadada;border:1px solid;border-color:#fff #333 #333 #fff"><svg class="a" style="left:1.4px;top:2px" width="8" height="7" viewBox="0 0 8 7"><path d="M0.8 6L3.8 0.8" stroke="#fff" stroke-width="1"/><path d="M3.8 0.8L7.2 6H0.8" fill="none" stroke="#222" stroke-width="1"/></svg></div>
 <div class="a" style="left:359.4px;top:15.4px;width:11.6px;height:21.4px;background:#dadada;border:1px solid;border-color:#fff #333 #333 #fff;font-size:8px;text-align:center;line-height:20px;color:#111">?</div>
 <!-- task button -->
 <div class="a" style="left:372px;top:2.8px;width:73.4px;height:35px;background:#c3c3c3;border:2px solid;border-color:#151515 #f2f2f2 #f2f2f2 #151515">
  <svg class="a" style="left:2.4px;top:10.4px" width="10" height="11" viewBox="0 0 10 11"><circle cx="5" cy="5.4" r="4.4" fill="#e8e86c"/><path d="M3.6 2.6H6.2V4.4L7.4 5.6L6.4 8.4H3.4L4.4 5.6Z" fill="#555"/></svg>
  <span class="a" style="left:14px;top:10.4px;font-size:11.5px;letter-spacing:-0.35px;white-space:nowrap">/mnt/cdrom</span>
 </div>
 <!-- clock -->
 <div class="a" style="left:682px;top:2.4px;width:65.4px;height:35.6px;background:#d9d9d9;border:1.4px solid;border-color:#333 #f8f8f8 #f8f8f8 #333">
  <span class="a" style="left:0;right:0;top:4.8px;text-align:center;font-size:10.8px;letter-spacing:-0.1px;white-space:nowrap">5月20日Sat</span>
  <span class="a" style="left:0;right:0;top:18.4px;text-align:center;font-size:10.4px;letter-spacing:0.1px;white-space:nowrap;color:#333">12:09 PM</span>
 </div>
</div>
</body></html>
